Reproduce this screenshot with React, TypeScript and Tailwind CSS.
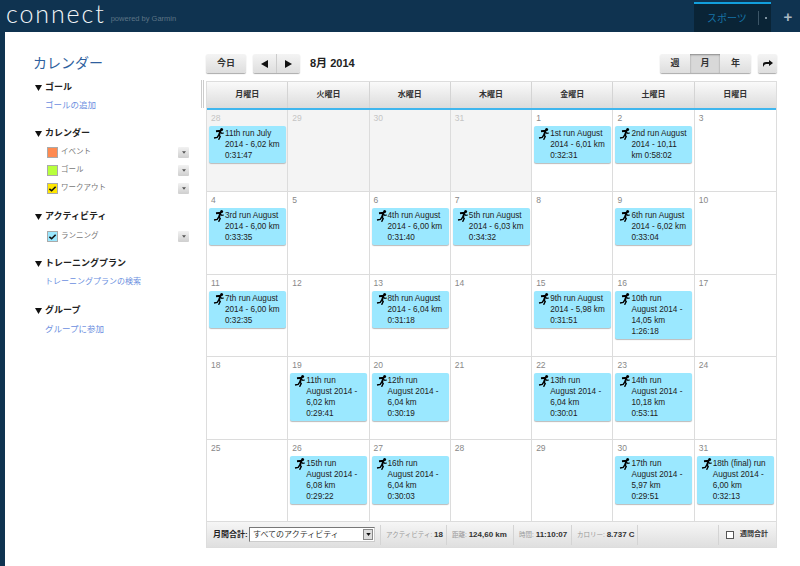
const jp = { fontFamily: '"Liberation Sans", "Noto Sans CJK JP", sans-serif' };

type Day = { n: number; run?: string; past?: boolean };

const days: Day[] = [
  { n: 28, past: true, run: "11th run July 2014 - 6,02 km 0:31:47" },
  { n: 29, past: true },
  { n: 30, past: true },
  { n: 31, past: true },
  { n: 1, run: "1st run August 2014 - 6,01 km 0:32:31" },
  { n: 2, run: "2nd run August 2014 - 10,11 km 0:58:02" },
  { n: 3 },
  { n: 4, run: "3rd run August 2014 - 6,00 km 0:33:35" },
  { n: 5 },
  { n: 6, run: "4th run August 2014 - 6,00 km 0:31:40" },
  { n: 7, run: "5th run August 2014 - 6,03 km 0:34:32" },
  { n: 8 },
  { n: 9, run: "6th run August 2014 - 6,02 km 0:33:04" },
  { n: 10 },
  { n: 11, run: "7th run August 2014 - 6,00 km 0:32:35" },
  { n: 12 },
  { n: 13, run: "8th run August 2014 - 6,04 km 0:31:18" },
  { n: 14 },
  { n: 15, run: "9th run August 2014 - 5,98 km 0:31:51" },
  { n: 16, run: "10th run August 2014 - 14,05 km 1:26:18" },
  { n: 17 },
  { n: 18 },
  { n: 19, run: "11th run August 2014 - 6,02 km 0:29:41" },
  { n: 20, run: "12th run August 2014 - 6,04 km 0:30:19" },
  { n: 21 },
  { n: 22, run: "13th run August 2014 - 6,04 km 0:30:01" },
  { n: 23, run: "14th run August 2014 - 10,18 km 0:53:11" },
  { n: 24 },
  { n: 25 },
  { n: 26, run: "15th run August 2014 - 6,08 km 0:29:22" },
  { n: 27, run: "16th run August 2014 - 6,04 km 0:30:03" },
  { n: 28 },
  { n: 29 },
  { n: 30, run: "17th run August 2014 - 5,97 km 0:29:51" },
  { n: 31, run: "18th (final) run August 2014 - 6,00 km 0:32:13" },
];

const weekdays = ["月曜日", "火曜日", "水曜日", "木曜日", "金曜日", "土曜日", "日曜日"];

function Runner() {
  return (
    <svg viewBox="0 0 11 12" className="absolute left-[4px] top-[2px] w-[11px] h-[12px]">
      <circle cx="8.6" cy="1.5" r="1.5" fill="#000" />
      <path d="M3 3.2 L7.4 2.8 L6 7.2" stroke="#000" strokeWidth="2" fill="none" />
      <path d="M7 3.6 L8.8 5.4 L10.8 5" stroke="#000" strokeWidth="1.2" fill="none" />
      <path d="M6 7 L7.2 8.6 L5.6 11.8" stroke="#000" strokeWidth="1.4" fill="none" />
      <path d="M5.8 7 L4.2 9.4 L1 10" stroke="#000" strokeWidth="1.4" fill="none" />
    </svg>
  );
}

function MiniBtn() {
  return (
    <div className="w-[11px] h-[11px] rounded-[1px] bg-gradient-to-b from-[#f2f2f2] to-[#cfcfcf] flex items-center justify-center text-[#555]">
      <svg viewBox="0 0 5 3" className="w-[4px] h-[3px]">
        <path d="M0 0 H5 L2.5 3 Z" fill="currentColor" />
      </svg>
    </div>
  );
}

function SideHead({ label }: { label: string }) {
  return (
    <div className="flex items-center h-[14px] text-[9px] font-bold text-[#222]">
      <svg viewBox="0 0 7 6" className="w-[7px] h-[6px] mr-[3px]">
        <path d="M0 0 H7 L3.5 6 Z" fill="#111" />
      </svg>
      {label}
    </div>
  );
}

function Legend({ label, color, check }: { label: string; color: string; check?: boolean }) {
  return (
    <div className="flex items-center h-[18px] pl-[12px] w-[154px]">
      <div className={`w-[11px] h-[11px] border border-[#aaa] flex items-center justify-center ${color}`}>
        {check && (
          <svg viewBox="0 0 10 10" className="w-[9px] h-[9px]">
            <path d="M1.5 5.5 L4 7.5 L8.5 3" stroke="#111" strokeWidth="1.8" fill="none" />
          </svg>
        )}
      </div>
      <span className="ml-[3px] text-[7.5px] text-[#777] flex-1">{label}</span>
      <MiniBtn />
    </div>
  );
}

function Btn({ children, className = "" }: { children: React.ReactNode; className?: string }) {
  return (
    <div
      className={`h-[19px] flex items-center justify-center rounded-[2px] bg-gradient-to-b from-[#f4f4f4] to-[#dedede] shadow-[0_1px_1px_#aaa] text-[9px] font-bold text-[#333] ${className}`}
    >
      {children}
    </div>
  );
}

function Stat({ label, value, className }: { label: string; value: string; className: string }) {
  return (
    <div className={`h-[20px] border-r border-[#d4d4d4] flex items-center whitespace-nowrap pl-[5px] text-[6.5px] text-[#999] ${className}`}>
      {label}:&nbsp;<b className="text-[8px] text-[#333]">{value}</b>
    </div>
  );
}

export default function App() {
  return (
    <div className="w-[800px] h-[566px] overflow-hidden bg-white flex flex-col" style={jp}>
      {/* ヘッダー */}
      <header className="h-[32px] bg-[#0f3350] flex shrink-0">
        <div className="flex items-start pl-[6px] w-[694px]">
          <span
            className="text-[#f2f6f8] text-[25px] leading-[26px] font-light tracking-[1.9px]"
            style={{ fontFamily: "Lato, sans-serif" }}
          >
            connect
          </span>
          <span className="ml-[5px] mt-[14px] text-[7.5px] leading-[10px] text-[#5d7485]">powered by Garmin</span>
        </div>
        <div className="mt-[2px] w-[77px] bg-[#0a2436] border-t-2 border-[#129fdc] flex items-center">
          <span className="ml-[13px] w-[51px] text-[10px] text-[#1673a6]">スポーツ</span>
          <div className="w-px h-[14px] bg-[#3b5566]" />
          <div className="ml-[6px] w-[2px] h-[2px] bg-[#7e92a0]" />
        </div>
        <div className="flex-1 flex items-center justify-center pl-[5px] pt-[2px] text-[15px] font-bold text-[#a9b8c2]">
          +
        </div>
      </header>

      <div className="flex-1 flex border-l-[5px] border-[#0f3350]">
        {/* サイドバー */}
        <aside className="w-[196px] shrink-0 pl-[30px] pt-[21px]">
          <h1 className="text-[14px] leading-[20px] text-[#2f5f9e] -ml-[2px]">カレンダー</h1>
          <div className="mt-[8px]">
            <SideHead label="ゴール" />
            <div className="pl-[10px] mt-[4px] h-[14px] text-[8.5px] text-[#6c8fe0]">ゴールの追加</div>
          </div>
          <div className="mt-[14px]">
            <SideHead label="カレンダー" />
            <div className="mt-[2px]">
              <Legend label="イベント" color="bg-[#ff8a50]" />
              <Legend label="ゴール" color="bg-[#b8ff3c]" />
              <Legend label="ワークアウト" color="bg-[#ffe600]" check />
            </div>
          </div>
          <div className="mt-[13px]">
            <SideHead label="アクティビティ" />
            <div className="mt-[3px]">
              <Legend label="ランニング" color="bg-[#9be8ff]" check />
            </div>
          </div>
          <div className="mt-[12px]">
            <SideHead label="トレーニングプラン" />
            <div className="pl-[10px] mt-[5px] h-[14px] text-[8px] text-[#6c8fe0]">トレーニングプランの検索</div>
          </div>
          <div className="mt-[14px]">
            <SideHead label="グループ" />
            <div className="pl-[10px] mt-[5px] h-[14px] text-[8.5px] text-[#6c8fe0]">グループに参加</div>
          </div>
        </aside>

        <div className="mt-[48px] w-[3px] h-[28px] border-x border-[#ccc] shrink-0" />
        <div className="w-[2px] shrink-0" />

        {/* カレンダー本体 */}
        <main className="w-[571px] pt-[22px]">
          <div className="h-[19px] flex items-center">
            <Btn className="w-[40px]">今日</Btn>
            <Btn className="w-[47px] ml-[7px]">
              <div className="flex-1 flex justify-center border-r border-[#ccc] h-full items-center">
                <svg viewBox="0 0 7 8" className="w-[7px] h-[8px]">
                  <path d="M7 0 V8 L0 4 Z" fill="#111" />
                </svg>
              </div>
              <div className="flex-1 flex justify-center h-full items-center">
                <svg viewBox="0 0 7 8" className="w-[7px] h-[8px]">
                  <path d="M0 0 V8 L7 4 Z" fill="#111" />
                </svg>
              </div>
            </Btn>
            <span className="ml-[10px] text-[11px] font-bold text-[#222]">8月 2014</span>
            <Btn className="w-[91px] ml-auto">
              <span className="w-[30px] text-center">週</span>
              <span className="w-[30px] h-full flex items-center justify-center bg-[#d8d8d8] shadow-[inset_0_1px_2px_#888]">月</span>
              <span className="w-[31px] text-center">年</span>
            </Btn>
            <Btn className="w-[19px] ml-[7px]">
              <svg viewBox="0 0 10 7" className="w-[10px] h-[7px]">
                <path d="M0 7 V4 Q0 2 3 2 H6 V0 L10 3 L6 6 V4 H3 Q1.5 4 0 7 Z" fill="#111" />
              </svg>
            </Btn>
          </div>

          <div className="mt-[8px] border border-[#ddd] border-b-0">
            <div className="grid grid-cols-7 h-[26px] bg-gradient-to-b from-[#fafafa] to-[#dcdcdc]">
              {weekdays.map((d) => (
                <div key={d} className="flex items-center justify-center text-[8px] font-bold text-[#333] border-r border-[#d4d4d4] last:border-r-0">
                  {d}
                </div>
              ))}
            </div>
            <div className="h-[2px] bg-[#3fb6ee]" />
            <div className="grid grid-cols-7 grid-rows-5 h-[412px]">
              {days.map((d, i) => (
                <div
                  key={i}
                  className={`border-r border-b border-[#dcdcdc] px-[2px] pt-[2px] [&:nth-child(7n)]:border-r-0 ${d.past ? "bg-[#f4f4f4]" : ""}`}
                >
                  <div className={`h-[14px] pl-[2px] text-[8.5px] leading-[12px] ${d.past ? "text-[#c4c4c4]" : "text-[#888]"}`}>
                    {d.n}
                  </div>
                  {d.run && (
                    <div className="relative w-[77px] bg-[#9be8ff] rounded-[2px] shadow-[0_1px_1px_#bbb] pl-[16px] pr-[5px] py-[2px] text-[8.2px] leading-[11px] text-[#222]">
                      <Runner />
                      {d.run}
                    </div>
                  )}
                </div>
              ))}
            </div>
          </div>

          {/* 月間合計 */}
          <div className="h-[26px] flex items-center bg-gradient-to-b from-[#f6f6f6] to-[#dfdfdf] border border-t-0 border-[#ddd]">
            <span className="ml-[6px] text-[8px] font-bold text-[#222] w-[36px] whitespace-nowrap">月間合計:</span>
            <div className="w-[126px] h-[15px] bg-white border border-[#777] border-r-[#ccc] border-b-[#ccc] flex items-center text-[8px] text-[#333] pl-[3px]">
              <span className="flex-1">すべてのアクティビティ</span>
              <div className="w-[10px] h-[11px] mr-[1px] bg-[#ddd] border border-[#888] flex items-center justify-center">
                <svg viewBox="0 0 6 4" className="w-[5px] h-[3px]">
                  <path d="M0 0 H6 L3 4 Z" fill="#111" />
                </svg>
              </div>
            </div>
            <div className="w-[6px] h-[20px] border-r border-[#d4d4d4]" />
            <Stat label="アクティビティ" value="18" className="w-[66px]" />
            <Stat label="距離" value="124,60 km" className="w-[67px]" />
            <Stat label="時間" value="11:10:07" className="w-[58px]" />
            <Stat label="カロリー" value="8.737 C" className="w-[66px]" />
            <div className="w-[81px] h-[20px] border-r border-[#d4d4d4]" />
            <div className="w-[8px] h-[8px] ml-[7px] bg-white border border-[#555]" />
            <span className="ml-[6px] text-[7px] font-bold text-[#333]">週間合計</span>
          </div>
        </main>
      </div>
    </div>
  );
}
